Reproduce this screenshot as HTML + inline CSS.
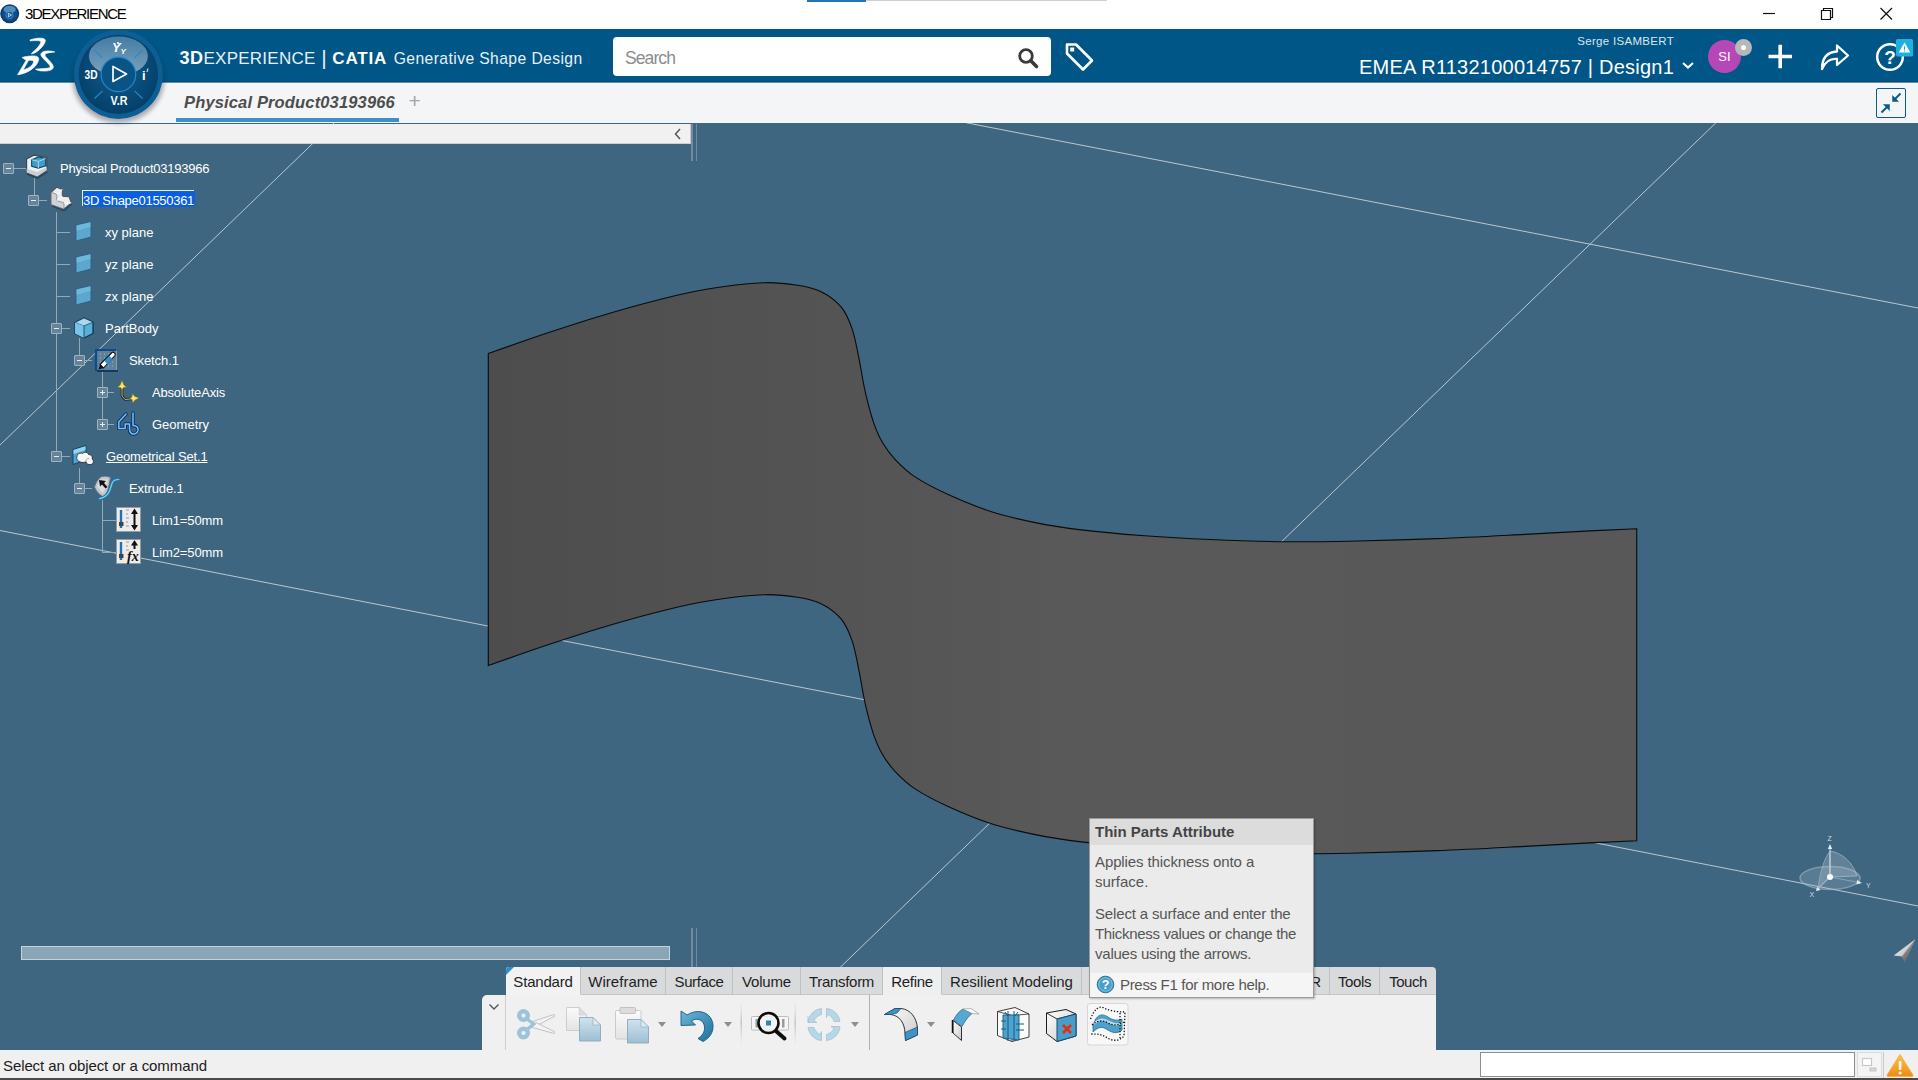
<!DOCTYPE html>
<html><head><meta charset="utf-8"><title>3DEXPERIENCE</title>
<style>
*{box-sizing:border-box;margin:0;padding:0}
html,body{width:1918px;height:1080px;overflow:hidden;background:#3e6680;font-family:"Liberation Sans","DejaVu Sans",sans-serif}
.abs{position:absolute}
#titlebar{left:0;top:0;width:1918px;height:29px;background:#fff}
#titlebar .t{left:25px;top:5px;font-size:15px;color:#000;letter-spacing:-1.28px;line-height:18px;white-space:nowrap}
#hdr{left:0;top:29px;width:1918px;height:53px;background:#005686;box-shadow:inset 0 -1px 0 #004c78}
#tabbar{left:0;top:82px;width:1918px;height:42px;background:#f4f5f6;border-bottom:1px solid #3f5a6e;box-shadow:inset 0 1px 0 #5a8fae}
#viewport{left:0;top:123px;width:1918px;height:927px;background:#3e6680;overflow:hidden}
#treehdr{left:0;top:124px;width:691px;height:20px;background:#f1f1f1;border-right:1px solid #c8c8c8;border-bottom:1px solid #d0d0d0}
#status{left:0;top:1050px;width:1918px;height:28px;background:#f0f0f0}
#bottomline{left:0;top:1078px;width:1918px;height:2px;background:#4a4a4a}
.tree{color:#fff;font-size:13px;white-space:nowrap}
.tree span{position:absolute;line-height:16px}

#hdr .brand{left:179.5px;top:15px;font-size:17px;color:#fff;white-space:nowrap;line-height:28px}
#hdr .brand b{font-weight:700}
#hdr .brand .lt{color:#e8f0f5;font-weight:400}
#hdr .brand .app{font-size:15.7px;margin-left:2px;color:#e8f0f5;letter-spacing:.4px}
#bbar{letter-spacing:-.1px;font-size:21px;font-weight:400;position:relative;top:.5px;line-height:10px}#b3d{font-size:18px;letter-spacing:.5px}#bexp{letter-spacing:.24px}#bcat{letter-spacing:.8px}
#search{left:613px;top:8px;width:438px;height:39px;background:#fff;border-radius:4px}
#search span{position:absolute;left:12px;top:11px;font-size:17.5px;color:#8c8c8c;letter-spacing:-.9px}
#user{right:244px;top:6px;letter-spacing:.3px;font-size:11.5px;color:#dbe6ee;white-space:nowrap}
#ctx{right:244px;top:25px;letter-spacing:.23px;font-size:20px;color:#fff;white-space:nowrap;line-height:26px}
#avatar{left:1708px;top:11px;width:33px;height:33px;border-radius:50%;background:#b647b6;color:#fff;font-size:13px;text-align:center;line-height:33px}
#avdot{left:1735px;top:10px;width:17px;height:17px;border-radius:50%;background:#b8b8b8}
#avdot i{position:absolute;left:6px;top:6px;width:5px;height:5px;border-radius:50%;background:#fff}
#ptab{left:184px;top:9px;letter-spacing:.15px;font-size:16.5px;font-weight:700;font-style:italic;color:#4d4d4d;white-space:nowrap;line-height:22px}
#ptabline{left:176px;top:36px;width:223px;height:4px;background:#3d8ec9}
#pplus{left:408.5px;top:7px;font-size:21px;color:#a5a5a5;line-height:24px}
#cmpbtn{left:1876px;top:6px;width:30px;height:30px;border:1px solid #0b5a88;border-radius:2px;background:#f4f5f6}
.tree .ln{position:absolute;background:#94a9b6;display:block}
.tree .ex{position:absolute;width:11px;height:11px;border:1px solid #9fb3bf;background:#66839a;display:block;border-radius:1px}
.tree .ex b{position:absolute;left:2px;top:4px;width:5px;height:1px;background:#e6edf1}
.tree .ex u{position:absolute;left:4px;top:2px;width:1px;height:5px;background:#e6edf1}
.tree span.sel{background:#0a5fe0;box-shadow:-1px -1px 0 #e8f1f8;padding:3px 1px 0 0;line-height:13px;margin-top:-2px}
.tree span.ul{text-decoration:underline}
#tabs{left:506px;top:967px;height:28px;width:930px;background:#d9dadb;border-radius:3px 4px 0 0;overflow:hidden;font-size:15px;color:#1e1e1e;white-space:nowrap}
#tabs span{position:absolute;top:0;height:28px;line-height:30px;text-align:center;border-right:1px solid #bfc2c4;border-bottom:1px solid #c6c6c6;letter-spacing:-0.2px}
#tabs span.on{background:#f2f2f2;border-bottom-color:#f2f2f2}
#tabs span.hv{background:#eeefef;border-bottom-color:#eeefef}
#tbody{left:482px;top:995px;width:954px;height:55px;background:#f0f0f0;border-radius:5px 0 0 0}
#tbody .sep{position:absolute;top:6px;width:1px;height:44px;background:#d3d3d3}
#tbody .dd{position:absolute;top:27px;width:0;height:0;border-left:4px solid transparent;border-right:4px solid transparent;border-top:5px solid #8e8e8e}
#tip{left:1089px;top:818px;width:225px;height:180px;background:#ebebeb;border:1px solid #9a9a9a;box-shadow:1px 1px 2px rgba(0,0,0,.25);font-size:15px;color:#555;white-space:nowrap}
#tip .tt{position:absolute;left:0;top:0;width:223px;height:26px;background:#dcdcdc;font-weight:700;color:#444;line-height:26px;padding-left:5px}
#tip p{position:absolute;left:5px;line-height:20px}
#tip .ft{letter-spacing:-.32px;position:absolute;left:0;top:154px;width:223px;height:24px;background:#f5f5f5;line-height:23px;padding-left:30px}
#status .st{position:absolute;left:3px;top:5px;font-size:15px;color:#1c1c1c;line-height:20px;white-space:nowrap}
#cmdbox{left:1480px;top:1052px;width:375px;height:25px;background:#fff;border:1px solid #8e8e8e}
#scroll{left:21px;top:946px;width:649px;height:14px;background:#8aa5b6;border:1px solid #c5d3dc}
.spl{background:#748b9c}
</style></head><body>
<div id="titlebar" class="abs"><span class="abs t">3DEXPERIENCE</span></div>
<div id="hdr" class="abs">
<div class="abs brand"><b id="b3d">3D</b><span class="lt" id="bexp">EXPERIENCE</span><span class="lt" id="bbar"> | </span><b id="bcat">CATIA</b> <span class="app" id="bapp">Generative Shape Design</span></div>
<div id="search" class="abs"><span>Search</span>
<svg class="abs" style="left:403px;top:9px" width="24" height="24" viewBox="0 0 24 24"><circle cx="10" cy="10" r="6.3" fill="none" stroke="#3a3a3a" stroke-width="2.8"/><line x1="14.8" y1="14.8" x2="20.5" y2="20.5" stroke="#3a3a3a" stroke-width="3.6" stroke-linecap="round"/></svg></div>
<div id="user" class="abs">Serge ISAMBERT</div>
<div id="ctx" class="abs">EMEA R1132100014757 | Design1</div>
<div id="avatar" class="abs">SI</div><div id="avdot" class="abs"><i></i></div>
</div>
<div id="tabbar" class="abs">
<div id="ptab" class="abs">Physical Product03193966</div><div id="ptabline" class="abs"></div><div id="pplus" class="abs">+</div>
<div id="cmpbtn" class="abs"></div>
</div>
<div id="viewport" class="abs">
<svg class="abs" style="left:0;top:0" width="1918" height="927" viewBox="0 123 1918 927">
<defs><linearGradient id="sg" x1="488" x2="1637" y1="0" y2="0" gradientUnits="userSpaceOnUse">
<stop offset="0" stop-color="#4d4d4d"/><stop offset="0.35" stop-color="#555"/><stop offset="0.5" stop-color="#595959"/><stop offset="1" stop-color="#585858"/></linearGradient></defs>
<g stroke="#bbc7cf" stroke-width="1" fill="none">
<line x1="334" y1="123" x2="0" y2="445"/>
<line x1="966" y1="122.7" x2="1918" y2="308"/>
<line x1="1716" y1="122.7" x2="840" y2="967.5"/>
<line x1="0" y1="530.5" x2="1918" y2="906"/>
</g>
<path id="shape" fill="url(#sg)" stroke="#0a0a0a" stroke-width="1.1" d="M488.3,353.6 C497.9,350.2 525.2,340.3 545.7,333.5 C566.2,326.7 589.5,319.1 611.4,312.7 C633.3,306.3 658.8,299.5 677.0,295.2 C695.2,290.9 706.3,289.1 720.9,287.0 C735.5,284.9 751.8,283.0 764.6,282.7 C777.4,282.4 788.0,283.8 797.5,285.3 C807.0,286.8 814.3,288.2 821.6,291.9 C828.9,295.5 836.2,301.0 841.3,307.2 C846.4,313.4 849.3,320.7 852.2,329.1 C855.1,337.5 856.6,347.0 858.8,357.6 C861.0,368.2 862.9,381.8 865.4,392.6 C867.9,403.4 870.8,414.3 873.6,422.6 C876.5,430.9 878.9,436.4 882.5,442.5 C886.1,448.6 889.6,453.6 895.0,459.3 C900.4,465.0 905.9,470.8 914.7,476.6 C923.5,482.4 934.8,488.4 947.6,494.2 C960.4,500.0 976.8,507.0 991.4,511.7 C1006.0,516.4 1020.6,519.6 1035.2,522.6 C1049.8,525.6 1060.8,527.4 1079.0,529.6 C1097.2,531.8 1122.8,534.1 1144.7,535.8 C1166.6,537.4 1187.1,538.5 1210.3,539.5 C1233.5,540.5 1260.6,541.4 1283.8,541.7 C1307.0,542.0 1324.0,541.7 1349.5,541.2 C1375.0,540.7 1407.8,539.7 1437.0,538.6 C1466.2,537.5 1499.0,535.7 1524.6,534.4 C1550.1,533.1 1571.6,531.8 1590.3,530.9 C1609.0,530.0 1629.0,529.1 1636.7,528.8 L1636.7,840.8 C1629.0,841.1 1609.0,842.0 1590.3,842.9 C1571.6,843.8 1550.1,845.1 1524.6,846.4 C1499.0,847.7 1466.2,849.5 1437.0,850.6 C1407.8,851.7 1375.0,852.7 1349.5,853.2 C1324.0,853.7 1307.0,854.0 1283.8,853.7 C1260.6,853.4 1233.5,852.5 1210.3,851.5 C1187.1,850.5 1166.6,849.4 1144.7,847.8 C1122.8,846.1 1097.2,843.8 1079.0,841.6 C1060.8,839.4 1049.8,837.6 1035.2,834.6 C1020.6,831.6 1006.0,828.4 991.4,823.7 C976.8,819.0 960.4,812.1 947.6,806.2 C934.8,800.4 923.5,794.4 914.7,788.6 C905.9,782.8 900.4,777.0 895.0,771.3 C889.6,765.6 886.1,760.6 882.5,754.5 C878.9,748.4 876.5,742.9 873.6,734.6 C870.8,726.3 867.9,715.4 865.4,704.6 C862.9,693.8 861.0,680.2 858.8,669.6 C856.6,659.0 855.1,649.5 852.2,641.1 C849.3,632.7 846.4,625.4 841.3,619.2 C836.2,613.0 828.9,607.5 821.6,603.9 C814.3,600.2 807.0,598.8 797.5,597.3 C788.0,595.8 777.4,594.4 764.6,594.7 C751.8,595.0 735.5,596.9 720.9,599.0 C706.3,601.1 695.2,602.9 677.0,607.2 C658.8,611.5 633.3,618.3 611.4,624.7 C589.5,631.1 566.2,638.7 545.7,645.5 C525.2,652.3 497.9,662.2 488.3,665.6 Z"/>
</svg>
</div>
<div id="treehdr" class="abs"></div>
<div id="status" class="abs"></div>
<div id="bottomline" class="abs"></div>
<div class="tree abs" style="left:0;top:0;width:700px;height:1080px;pointer-events:none">
<i class="ln" style="left:13px;top:168px;width:13px;height:1px"></i>
<i class="ln" style="left:34px;top:178px;width:1px;height:22px"></i>
<i class="ln" style="left:38px;top:200px;width:9px;height:1px"></i>
<i class="ln" style="left:56px;top:212px;width:1px;height:244px"></i>
<i class="ln" style="left:56px;top:232px;width:14px;height:1px"></i>
<i class="ln" style="left:56px;top:264px;width:14px;height:1px"></i>
<i class="ln" style="left:56px;top:296px;width:14px;height:1px"></i>
<i class="ln" style="left:61px;top:328px;width:9px;height:1px"></i>
<i class="ln" style="left:61px;top:456px;width:9px;height:1px"></i>
<i class="ln" style="left:79px;top:338px;width:1px;height:22px"></i>
<i class="ln" style="left:84px;top:360px;width:8px;height:1px"></i>
<i class="ln" style="left:102px;top:372px;width:1px;height:52px"></i>
<i class="ln" style="left:107px;top:392px;width:7px;height:1px"></i>
<i class="ln" style="left:107px;top:424px;width:7px;height:1px"></i>
<i class="ln" style="left:79px;top:468px;width:1px;height:20px"></i>
<i class="ln" style="left:84px;top:488px;width:8px;height:1px"></i>
<i class="ln" style="left:102px;top:500px;width:1px;height:52px"></i>
<i class="ln" style="left:102px;top:520px;width:14px;height:1px"></i>
<i class="ln" style="left:102px;top:552px;width:14px;height:1px"></i>
<i class="ex" style="left:3px;top:163px"><b></b></i>
<svg class="abs" style="left:25px;top:156px;overflow:visible" width="24" height="24" viewBox="0 0 24 24"><g transform="translate(-1.2,-3.6) scale(1.12)"><path d="M2.500,6 L9,2.500 L20.500,4.500 L20.500,16 L12,21.500 L2.500,18Z" fill="#eef1f3" stroke="#3b444b" stroke-width="1"/><path d="M2.500,18 L12,21.500 L20.500,16 L20.500,13 L12,17.500 L2.500,14.500Z" fill="#c9cfd4"/><path d="M7,6.500 L13,4 L19.500,5.500 L19.500,12 L13,14 L7,12.500Z" fill="#3f9dcc" stroke="#0f4a6b" stroke-width="1"/><path d="M7,6.500 L13,8 L19.500,5.500 M13,8 L13,14" stroke="#b9e0f2" stroke-width=".8" fill="none"/><path d="M3,19.500 L12,23 L21,17.500" stroke="#1e2a33" stroke-width="1.200" fill="none" opacity=".6"/></g></svg>
<span style="left:60px;top:161px;letter-spacing:-0.22px">Physical Product03193966</span>
<i class="ex" style="left:28px;top:195px"><b></b></i>
<svg class="abs" style="left:49px;top:188px;overflow:visible" width="24" height="24" viewBox="0 0 24 24"><g transform="translate(-1.2,-3.6) scale(1.12)"><path d="M3,7 L8,2.500 L13,4.500 L13,10.500 L19,11 L21,16.500 L14.500,22 L3,18Z" fill="#ebedee" stroke="#4f575d" stroke-width="1"/><path d="M3,7 L8,9 L8,14.500 L14.500,16.500 L14.500,22 L3,18Z" fill="#cfd3d6" stroke="#6f777d" stroke-width=".6"/><path d="M8,9 L13,4.500 M8,14.500 L13,10.500 M14.500,16.500 L21,16.500" stroke="#fbfbfb" stroke-width=".9"/><path d="M4,19.500 L14.500,23.500 L21.500,17.500" stroke="#222c33" stroke-width="1.200" fill="none" opacity=".55"/></g></svg>
<span class="sel" style="left:83px;top:193px;letter-spacing:-0.29px">3D Shape01550361</span>
<svg class="abs" style="left:72px;top:220px;overflow:visible" width="24" height="24" viewBox="0 0 24 24"><path d="M4,5 L19,1.500 L19,17 L4,21Z" fill="#5aa8cf" stroke="#2a6588" stroke-width="1"/><path d="M4.500,5.500 L18.500,2.200 L18.500,7 L4.500,11Z" fill="#86c3e0" opacity=".55"/></svg>
<span style="left:105px;top:225px">xy plane</span>
<svg class="abs" style="left:72px;top:252px;overflow:visible" width="24" height="24" viewBox="0 0 24 24"><path d="M4,5 L19,1.500 L19,17 L4,21Z" fill="#5aa8cf" stroke="#2a6588" stroke-width="1"/><path d="M4.500,5.500 L18.500,2.200 L18.500,7 L4.500,11Z" fill="#86c3e0" opacity=".55"/></svg>
<span style="left:105px;top:257px">yz plane</span>
<svg class="abs" style="left:72px;top:284px;overflow:visible" width="24" height="24" viewBox="0 0 24 24"><path d="M4,5 L19,1.500 L19,17 L4,21Z" fill="#5aa8cf" stroke="#2a6588" stroke-width="1"/><path d="M4.500,5.500 L18.500,2.200 L18.500,7 L4.500,11Z" fill="#86c3e0" opacity=".55"/></svg>
<span style="left:105px;top:289px">zx plane</span>
<i class="ex" style="left:51px;top:323px"><b></b></i>
<svg class="abs" style="left:72px;top:316px;overflow:visible" width="24" height="24" viewBox="0 0 24 24"><path d="M3,6.500 L12,2 L21,6 L21,17.500 L12,22 L3,17.500Z" fill="#57b0db" stroke="#0d3a55" stroke-width="1.300" stroke-linejoin="round"/><path d="M3,6.500 L12,10 L21,6 L12,2Z" fill="#a9daf0" stroke="#0d3a55" stroke-width=".7"/><path d="M3,6.500 L12,10 L12,22 L3,17.500Z" fill="#7ac3e6"/><path d="M12,10 L12,22" stroke="#0d3a55" stroke-width=".8"/></svg>
<span style="left:105px;top:321px">PartBody</span>
<i class="ex" style="left:74px;top:355px"><b></b></i>
<svg class="abs" style="left:94px;top:348px;overflow:visible" width="24" height="24" viewBox="0 0 24 24"><rect x="2.500" y="2.500" width="20" height="19.500" fill="#5f8199"/><path d="M6,6h1M10,6h1M14,6h1M18,6h1M6,10h1M10,10h1M18,10h1M6,14h1M14,14h1M18,14h1M10,18h1M14,18h1M18,18h1" stroke="#9db3c2" stroke-width="1"/><path d="M2,23 V2 H22" fill="none" stroke="#0d4a8e" stroke-width="2.200"/><path d="M3,23 H24" stroke="#0b2f5c" stroke-width="1.600"/><path d="M22.500,3 V22" stroke="#8fa6b6" stroke-width=".8"/><path d="M6,16.500 L18,4.500 C19.500,3.500 22,5.500 21,7.500 L9.500,20 Z" fill="#fff" stroke="#111" stroke-width="1.100" stroke-linejoin="round"/><path d="M10.500,13 L15.500,8 L18.500,11 L13.500,16.500 Z" fill="#2a8cd2"/><path d="M6,16.500 L9.500,20 L4.500,21.500 Z" fill="#111"/></svg>
<span style="left:129px;top:353px;letter-spacing:-0.1px">Sketch.1</span>
<i class="ex" style="left:97px;top:387px"><b></b><u></u></i>
<svg class="abs" style="left:115px;top:380px;overflow:visible" width="24" height="24" viewBox="0 0 24 24"><path d="M7,6 L7,16 L10,19.500 L20,18.500" fill="none" stroke="#141f4d" stroke-width="2.600" stroke-linejoin="round"/><path d="M7,6 L7,16 L10,19.500 L20,18.500" fill="none" stroke="#e8c53a" stroke-width=".9"/><path d="M7,0.500 L8.800,5 L11.500,7 L8.500,7.500 L7,9.500 L5.500,7.500 L2.500,7 L5.200,5 Z" fill="#ffe36a" stroke="#8a6a00" stroke-width=".5"/><path d="M24,18 L19.500,16.300 L17.500,13.500 L17,16.800 L15,18.500 L17.200,19.800 L17.800,23 L19.800,20.200 Z" fill="#ffe36a" stroke="#8a6a00" stroke-width=".5"/></svg>
<span style="left:152px;top:385px;letter-spacing:-0.18px">AbsoluteAxis</span>
<i class="ex" style="left:97px;top:419px"><b></b><u></u></i>
<svg class="abs" style="left:115px;top:412px;overflow:visible" width="24" height="24" viewBox="0 0 24 24"><g fill="none" stroke-linejoin="round" stroke-linecap="round"><path d="M10.200,16.400 H3.800 V10 L11,2 M18,1 V13.500 C22,13.500 23.500,16 23,18.500 C22.500,21.500 19,23 16.500,21.500 C14.800,20.500 14.500,19 14.500,17 V12 H10.200 V16.400" stroke="#0f2f6e" stroke-width="3.400"/><path d="M10.200,16.400 H3.800 V10 L11,2 M18,1 V13.500 C22,13.500 23.500,16 23,18.500 C22.500,21.500 19,23 16.500,21.500 C14.800,20.500 14.500,19 14.500,17 V12 H10.200 V16.400" stroke="#6ec6f2" stroke-width="1.500"/></g></svg>
<span style="left:152px;top:417px">Geometry</span>
<i class="ex" style="left:51px;top:451px"><b></b></i>
<svg class="abs" style="left:71px;top:444px;overflow:visible" width="24" height="24" viewBox="0 0 24 24"><path d="M2,5.500 L15,1.500 L15,16 L2,20.500Z" fill="#4da6d8" stroke="#0f4766" stroke-width="1"/><path d="M2.500,6 L14.500,2.200 L14.500,6 L2.500,10Z" fill="#9ad2ee"/><path d="M6,12.500 C6,9.500 9,8.500 11.500,9.500 C13,7.500 17,8 17.500,10.500 C20.500,10.500 22,13 21,15 C23.500,16.500 22.500,20.500 19.500,20.500 C17,21 15.500,19.500 15,18 C12,19 7.500,18.500 6.500,16 C5.500,15 5.500,13.500 6,12.500Z" fill="#f6f6f6" stroke="#2b2f33" stroke-width=".9"/><path d="M15,18 C14.500,16 16,14 18,14.500" fill="none" stroke="#8a8f94" stroke-width=".8"/></svg>
<span class="ul" style="left:106px;top:449px;letter-spacing:-0.15px">Geometrical Set.1</span>
<i class="ex" style="left:74px;top:483px"><b></b></i>
<svg class="abs" style="left:94px;top:476px;overflow:visible" width="26" height="26" viewBox="0 0 26 26"><path d="M0.500,11 C2,6 5,1.500 8,0.500 C11,0 14.500,0.500 16.500,1.500 L14.200,13 C13,17 11,19.500 8.800,20.500 C5,18.500 2,15 0.500,11Z" fill="#c2c6ca" stroke="#6a7075" stroke-width=".8"/><path d="M3,10 C4.500,6.500 6.500,4 8.500,3 L14,3.500 L12,12 C10.500,14 9.500,16 8.500,17.500Z" fill="#e4e6e8" opacity=".7"/><path d="M24.800,3.500 C21.500,3.500 19.500,4 18.400,6.500 C17,10 16.500,14 14.200,17.400 C12,20.500 9,22 5.600,22.700" fill="none" stroke="#1f76a8" stroke-width="3.400" stroke-linecap="round"/><path d="M24.800,3.500 C21.500,3.500 19.500,4 18.400,6.500 C17,10 16.500,14 14.200,17.400 C12,20.500 9,22 5.600,22.700" fill="none" stroke="#86cdee" stroke-width="1.200" stroke-linecap="round"/><path d="M5,4 L12,5 L10,7 L13.500,11 L11.500,12.500 L8,8.500 L6,10.500Z" fill="#111"/></svg>
<span style="left:129px;top:481px;letter-spacing:-0.1px">Extrude.1</span>
<svg class="abs" style="left:116px;top:507px;overflow:visible" width="25" height="25" viewBox="0 0 25 25"><rect x="0.5" y="0.5" width="24" height="24" fill="#ececec" stroke="#9a9a9a"/><path d="M5,3 L5,21" stroke="#1d74b3" stroke-width="2.4"/><rect x="3" y="15" width="4.5" height="4" fill="#444"/><path d="M10,3h3M10,7h2M10,11h3M10,15h2M10,19h3" stroke="#888" stroke-width=".8"/><path d="M18.5,5 L18.5,20" stroke="#111" stroke-width="2"/><path d="M18.5,1.5 L15,7 L22,7Z M18.5,23.500 L15,18 L22,18Z" fill="#111"/></svg>
<span style="left:152px;top:513px;letter-spacing:-0.1px">Lim1=50mm</span>
<svg class="abs" style="left:116px;top:539px;overflow:visible" width="25" height="25" viewBox="0 0 25 25"><rect x="0.5" y="0.5" width="24" height="24" fill="#ececec" stroke="#9a9a9a"/><path d="M5,3 L5,21" stroke="#1d74b3" stroke-width="2.4"/><rect x="3" y="15" width="4.5" height="4" fill="#444"/><path d="M10,3h3M10,7h2M10,11h3" stroke="#888" stroke-width=".8"/><path d="M18.500,4 L18.500,10" stroke="#111" stroke-width="2"/><path d="M18.5,1 L15,6.500 L22,6.500Z" fill="#111"/><text x="11" y="22" font-family="Liberation Serif,serif" font-style="italic" font-weight="700" font-size="14" fill="#111">fx</text></svg>
<span style="left:152px;top:545px;letter-spacing:-0.1px">Lim2=50mm</span>
</div><!-- tree header chevron -->
<svg class="abs" style="left:672px;top:127px" width="12" height="14" viewBox="0 0 12 14"><path d="M8,2 L3.5,7 L8,12" fill="none" stroke="#555" stroke-width="1.5"/></svg>
<!-- splitter -->
<i class="abs spl" style="left:691px;top:124px;width:2px;height:37px"></i><i class="abs spl" style="left:696px;top:124px;width:1px;height:37px"></i>
<i class="abs spl" style="left:691px;top:928px;width:2px;height:39px"></i><i class="abs spl" style="left:696px;top:928px;width:1px;height:39px"></i>
<div id="scroll" class="abs"></div>
<!-- toolbar -->
<div id="tabs" class="abs">
<span class="on" style="left:0;width:75px">Standard</span>
<span style="left:75px;width:85px;letter-spacing:.03px">Wireframe</span>
<span style="left:160px;width:67px;letter-spacing:-.4px">Surface</span>
<span style="left:227px;width:68px">Volume</span>
<span style="left:295px;width:82px;letter-spacing:-.3px">Transform</span>
<span class="hv" style="left:377px;width:59px;letter-spacing:-.35px">Refine</span>
<span style="left:436px;width:140px;letter-spacing:.02px">Resilient Modeling</span>
<span style="left:576px;width:248px;text-align:right;padding-right:8px">AR-VR</span>
<span style="left:824px;width:50px;letter-spacing:-.4px">Tools</span>
<span style="left:874px;width:56px;border-right:0;letter-spacing:-.5px">Touch</span>
<svg class="abs" style="left:0;top:0" width="8" height="8"><path d="M0,0 L8,0 L0,8Z" fill="#2f8ccf"/></svg>
</div>
<div id="tbody" class="abs">
<svg class="abs" style="left:6px;top:8px" width="12" height="8" viewBox="0 0 12 8"><path d="M1.500,1.500 L6,6 L10.500,1.500" fill="none" stroke="#555" stroke-width="1.4"/></svg>
<i class="sep" style="left:23px;top:0;height:55px;background:#cfcfcf"></i>
<i class="dd" style="left:176px"></i><i class="dd" style="left:242px"></i><i class="dd" style="left:369px"></i><i class="dd" style="left:445px"></i>
<svg class="abs" style="left:23px;top:0" width="660" height="55" viewBox="505 995 660 55">
<defs>
<linearGradient id="lb" x1="0" y1="0" x2="0" y2="1"><stop offset="0" stop-color="#cfe3ee"/><stop offset="1" stop-color="#9dbfd2"/></linearGradient>
<linearGradient id="wh" x1="0" y1="0" x2="0" y2="1"><stop offset="0" stop-color="#fbfbfb"/><stop offset="1" stop-color="#e3e3e3"/></linearGradient>
<linearGradient id="ub" x1="0" y1="0" x2="1" y2="1"><stop offset="0" stop-color="#6cb6da"/><stop offset="1" stop-color="#1f6f9c"/></linearGradient>
<linearGradient id="wg2" x1="0" y1="0" x2="1" y2="1"><stop offset="0" stop-color="#fff"/><stop offset="1" stop-color="#c9c9c9"/></linearGradient>
<linearGradient id="sepg" x1="0" y1="0" x2="0" y2="1"><stop offset="0" stop-color="#d9d9d9" stop-opacity="0"/><stop offset=".5" stop-color="#c4c4c4"/><stop offset="1" stop-color="#d9d9d9" stop-opacity="0"/></linearGradient>
</defs>
<!-- scissors -->
<g><path d="M531,1022 L554,1014.500 L555,1016 L536,1026 Z" fill="#f4f4f4" stroke="#b4b4b4" stroke-width=".8"/><path d="M531,1027 L554,1033.500 L555,1032 L536,1022.500 Z" fill="#f4f4f4" stroke="#b4b4b4" stroke-width=".8"/>
<circle cx="523.500" cy="1015.500" r="4.300" fill="none" stroke="#9cc3d9" stroke-width="4.400"/><circle cx="523.500" cy="1033" r="4.300" fill="none" stroke="#9cc3d9" stroke-width="4.400"/>
<path d="M527,1019 L535,1025 M527,1029.500 L535,1023" stroke="#9cc3d9" stroke-width="3.400"/></g>
<!-- copy -->
<path d="M566.500,1007.500 H579 L586.500,1015 V1030.500 H566.500 Z" fill="url(#wh)" stroke="#c9c9c9" stroke-width=".9"/><path d="M579,1007.500 V1015 H586.500 Z" fill="#dedede" stroke="#c9c9c9" stroke-width=".6"/>
<path d="M579.500,1017.500 H593 L600.500,1025 V1041 H579.500 Z" fill="url(#lb)" stroke="#8aa9ba" stroke-width=".9"/><path d="M593,1017.500 V1025 H600.500 Z" fill="#dcebf3" stroke="#8aa9ba" stroke-width=".6"/>
<!-- paste -->
<rect x="615.500" y="1010.500" width="25.500" height="28.500" rx="1.500" fill="url(#wh)" stroke="#c6c6c6" stroke-width=".9"/><rect x="620" y="1007.500" width="15.500" height="6" rx="1" fill="#dcdcdc" stroke="#b9b9b9" stroke-width=".8"/>
<path d="M627.500,1019.500 H641 L648.500,1027 V1043 H627.500 Z" fill="url(#lb)" stroke="#8aa9ba" stroke-width=".9"/><path d="M641,1019.500 V1027 H648.500 Z" fill="#dcebf3" stroke="#8aa9ba" stroke-width=".6"/>
<!-- undo -->
<path d="M681,1011 L681,1025.500 L695.500,1025 L691.500,1021 C697,1017 704,1020 704.500,1027 C705,1032 702,1036 698,1038.500 L703,1041.500 C710,1038 713.500,1032 713,1025 C712,1013 699,1007.500 687,1015 Z" fill="url(#ub)" stroke="#175b83" stroke-width=".9" stroke-linejoin="round"/>
<!-- seps -->
<rect x="740.500" y="1000" width="1.500" height="46" fill="url(#sepg)"/><rect x="794.500" y="1000" width="1.500" height="46" fill="url(#sepg)"/>
<rect x="869" y="995" width="1" height="55" fill="#b0b0b0"/>
<!-- zoom -->
<rect x="751.500" y="1016.500" width="37" height="13.500" rx="1" fill="#f6f6f6" stroke="#b5b5b5" stroke-width=".9"/><rect x="755.500" y="1019" width="2.500" height="8.500" fill="#9a9a9a"/><rect x="782" y="1019" width="2.500" height="8.500" fill="#9a9a9a"/>
<circle cx="768.500" cy="1023" r="10" fill="#f3f3f3" fill-opacity=".85" stroke="#0c0c0c" stroke-width="2.600"/><rect x="766" y="1020.500" width="5" height="5" fill="#2d86ad"/>
<path d="M776.500,1031.500 L784.500,1038.500" stroke="#0c0c0c" stroke-width="4" stroke-linecap="round"/>
<!-- refresh -->
<g fill="#b7d6e6" stroke="#9bbfd2" stroke-width=".7" stroke-linejoin="round">
<path d="M808,1022.500 C808.500,1015 814,1009.500 821.500,1008.500 L821.500,1014.500 C818,1015.500 815,1018 814,1021 L817,1022.500 L808,1022.500Z M808,1022.500 L808,1016"/>
<path d="M826.500,1008.500 C833.500,1009 839,1014.500 840,1021.500 L834,1021.500 C833,1018 830.500,1015.500 827.500,1014.500 L826.500,1017.500 Z"/>
<path d="M840,1026.500 C839.500,1034 834,1039.500 826.500,1040.500 L826.500,1034.500 C830,1033.500 833,1031 834,1028 L831,1026.500 Z"/>
<path d="M821.500,1040.500 C814.500,1040 809,1034.500 808,1027.500 L814,1027.500 C815,1031 817.500,1033.500 820.500,1034.500 L821.500,1031.500 Z"/></g>
<!-- extrude -->
<path d="M884.500,1014.500 L895,1008.500 L901,1008.500 C911,1009.500 916.500,1018 917.500,1028 L917.500,1035 L905.500,1040.500 L905,1033 C904.500,1023 900,1016 891,1014.500 Z" fill="url(#wg2)" stroke="#1d1d1d" stroke-width=".9" stroke-linejoin="round"/>
<path d="M884.500,1014.500 L895,1008.500 L901,1008.500 L897,1013 L891,1014.500 Z" fill="#3f94c4" stroke="#174e70" stroke-width=".7"/>
<path d="M905,1032.500 L917.500,1027 L917.500,1035 L905.500,1040.500 Z" fill="#3f94c4" stroke="#174e70" stroke-width=".7"/>
<!-- icon2 -->
<path d="M953,1020.500 L961.500,1027 L961.500,1040.500 L953,1033 Z" fill="url(#wg2)" stroke="#1d1d1d" stroke-width=".9"/><path d="M952.500,1020 L952.500,1033" stroke="#111" stroke-width="1.500"/>
<path d="M953.500,1020 C956,1015 959,1011.500 963,1009 L972,1013.500 C968,1016.500 965,1021 962,1026.500 Z" fill="#56a8d4" stroke="#1d6c98" stroke-width=".8"/>
<path d="M963,1009 L971,1008.500 L979,1014 L972,1013.500 Z" fill="#fcfcfc" stroke="#8a8a8a" stroke-width=".6"/>
<!-- icon3 cube -->
<path d="M997.500,1011.500 L1015,1007.500 L1029,1014 L1029,1037 L1012,1041.500 L997.500,1035.500 Z" fill="#fafafa" stroke="#2a2a2a" stroke-width=".9" stroke-linejoin="round"/>
<path d="M997.500,1011.500 L1012,1015.500 L1029,1014 M1012,1015.500 L1012,1041.500" fill="none" stroke="#2a2a2a" stroke-width=".8"/>
<path d="M1003,1015 L1019,1015 L1019,1040 L1003,1038 Z" fill="#4ea3cf" stroke="#175b83" stroke-width=".9"/>
<path d="M1008,1011 V1041 M1014,1011 V1041 M1001,1021 H1006 M1001,1029 H1006 M1016,1024 H1024 M1016,1030 H1024 M1005,1012 L1008,1016 M1018,1012 L1015,1016" stroke="#175b83" stroke-width="1" fill="none"/>
<!-- icon4 cube x -->
<path d="M1046.500,1013 L1066,1009.500 L1076,1014 L1076,1036 L1057,1041.500 L1046.500,1033.500 Z" fill="url(#wg2)" stroke="#1c1c1c" stroke-width="1" stroke-linejoin="round"/>
<path d="M1046.500,1013 L1057,1019 L1076,1014" fill="none" stroke="#1c1c1c" stroke-width=".9"/>
<path d="M1057,1019 L1076,1014 L1076,1036 L1057,1041.500 Z" fill="#4a9dca" stroke="#12506f" stroke-width="1"/>
<path d="M1063,1025 L1071,1033 M1071,1025 L1063,1033" stroke="#e0310f" stroke-width="2.600"/>
<!-- icon5 hover -->
<rect x="1087.500" y="1003.500" width="40.500" height="41.500" rx="2.500" fill="#f8f8f8" stroke="#d6d6d6"/>
<path d="M1093,1026 C1096,1014 1102,1013 1108,1017 C1113,1020.500 1118,1021 1122,1019 L1122,1030 C1118,1034 1112,1033 1107,1029.500 C1102,1026 1098,1027 1093,1032 Z" fill="#4f9fc7" stroke="#1f6f98" stroke-width=".8"/>
<path d="M1094,1024 C1100,1018 1104,1019 1109,1022 C1114,1025 1118,1025 1122,1023" fill="none" stroke="#b7dcee" stroke-width="2.200"/>
<g fill="none" stroke="#111" stroke-width="1.300" stroke-dasharray="1.300 1.700"><path d="M1090.500,1019 C1094,1010 1099,1005 1104,1008 C1110,1011 1118,1012 1125,1012 L1124,1036 C1119,1042 1111,1041 1106,1037 C1101,1034 1096,1034 1091,1034"/><path d="M1092,1025 C1098,1020 1103,1020 1108,1023 C1113,1026 1119,1025 1124,1022"/><path d="M1120,1013 V1038"/></g>
</svg>

</div>
<!-- tooltip -->
<div id="tip" class="abs">
<div class="tt">Thin Parts Attribute</div>
<p style="top:33px"><span style="letter-spacing:-.11px">Applies thickness onto a</span><br>surface.</p>
<p style="top:85px"><span style="letter-spacing:-.153px">Select a surface and enter the</span><br><span style="letter-spacing:-.33px">Thickness values or change the</span><br><span style="letter-spacing:-.23px">values using the arrows.</span></p>
<div class="ft">Press F1 for more help.</div>
<svg class="abs" style="left:6px;top:156px" width="19" height="19" viewBox="0 0 19 19"><circle cx="9.5" cy="9.5" r="8.3" fill="#4a9fc9" stroke="#2a6f96" stroke-width="1"/><circle cx="9.5" cy="9.5" r="6.7" fill="none" stroke="#8fcbe6" stroke-width=".8"/><text x="9.5" y="14" text-anchor="middle" font-family="Liberation Sans,sans-serif" font-weight="700" font-size="12.5" fill="#fff">?</text></svg>
</div>
<!-- status -->
<div id="status2" class="abs" style="left:0;top:1050px;width:1918px;height:28px"><span class="st abs" style="left:3px;top:6px;font-size:15px;color:#1c1c1c;line-height:20px;white-space:nowrap;letter-spacing:-.1px">Select an object or a command</span></div>
<div id="cmdbox" class="abs"></div>
<svg class="abs" style="left:1857px;top:1052px" width="61" height="26" viewBox="0 0 61 26">
<rect x="0.5" y="0.5" width="24" height="24" fill="#f4f4f4" stroke="#dcdcdc"/><rect x="5.5" y="6.5" width="9" height="7" fill="#fff" stroke="#c9c9c9" stroke-width="1.2"/><rect x="13" y="16" width="6" height="3" fill="#d9d9d9" stroke="#bbb" stroke-width=".8"/>
<line x1="26.5" y1="0" x2="26.5" y2="26" stroke="#c9c9c9"/>
<defs><linearGradient id="wg" x1="0" y1="0" x2="0" y2="1"><stop offset="0" stop-color="#ffc24d"/><stop offset="1" stop-color="#f08a12"/></linearGradient></defs>
<path d="M43,2.500 L56,23 Q56.500,24.500 55,24.500 L31,24.500 Q29.500,24.500 30,23 Z" fill="url(#wg)" stroke="#f7b24a" stroke-width="1" stroke-linejoin="round"/>
<rect x="41.800" y="9" width="2.600" height="9" rx="1.200" fill="#fff"/><circle cx="43.100" cy="21" r="1.500" fill="#fff"/>
</svg>
<!-- title bar bits -->
<i class="abs" style="left:807px;top:0;width:59px;height:2px;background:#1f74b6"></i><i class="abs" style="left:866px;top:0;width:241px;height:1px;background:#cfcfcf"></i>
<svg class="abs" style="left:0;top:4px" width="20" height="20" viewBox="0 0 20 20"><circle cx="9.700" cy="9.700" r="9.500" fill="#0a3d75"/><circle cx="9.700" cy="9.700" r="7.600" fill="#0f4f8a"/><ellipse cx="9.700" cy="5.500" rx="6" ry="3.800" fill="#5d97c4" opacity=".85"/><circle cx="9.500" cy="11" r="3.600" fill="#0e588c" stroke="#55a7df" stroke-width=".6"/><path d="M8.400,9.200 L11.500,11 L8.400,12.800Z" fill="none" stroke="#fff" stroke-width=".7"/></svg>
<svg class="abs" style="left:1750px;top:0" width="168" height="29" viewBox="0 0 168 29"><g stroke="#111" stroke-width="1.2" fill="none"><path d="M13,13.500 H25"/><path d="M71.500,10.500 h9 v9 h-9 Z M73.500,10.500 V8.500 h9 v9 h-2"/><path d="M130.500,8 L142,19.500 M142,8 L130.500,19.500"/></g></svg>
<!-- 3DS logo -->
<svg class="abs" style="left:0;top:29px" width="70" height="53" viewBox="0 29 70 53"><g fill="#fff" fill-rule="evenodd" stroke="#fff" stroke-width=".7" stroke-linejoin="round">
<path d="M30.1,39.9 C34,38.600 38,38 40.600,38.200 C44.500,38.300 45.800,39.500 45.200,41.500 C44.500,44.500 41,48.500 37.500,51.200 C35.500,52.700 33.500,53.600 31.400,53.900 L32.400,52.400 C35,50.500 37.500,48 39.200,45.500 C40.800,43 41.500,41.800 40.200,41.100 C38.500,40.400 34,40.500 30.100,40.900 Z"/>
<path d="M22,57.500 C26,56.300 31,55.800 34.500,56 C38,56.300 39.300,57.800 38.500,60.500 C37.500,64 34.500,67.500 30.400,70.200 C26.500,72.600 22,74.200 17.600,74.800 L26.200,60.200 C25,59.500 23.500,58.500 22,57.500 Z M28.500,60.300 C31,60 33.500,60.200 33.600,61.500 C33.700,63.500 31.500,66 29,67.500 C27,68.800 25,69.500 23.200,69.800 Z"/>
<path d="M54.800,51.900 C51,50.800 47.500,50.800 45,51.300 C41.500,52 40,54 41.500,56.300 C43.500,59.300 47,62 49.500,65 C50.800,66.600 50.300,67.800 48,68.200 C44.500,68.700 39.500,68.600 35.500,69.200 C38,70.800 42,71.200 45.500,71 C50,70.800 53.500,69.500 53.300,66.800 C53,64 49.500,61 46.800,58 C45,56 44.200,54.300 46.200,53.400 C48.500,52.500 52,52.500 54.800,51.900 Z"/></g></svg>
<!-- compass wheel -->
<svg class="abs" style="left:66px;top:24px" width="106" height="104" viewBox="66 24 106 104">
<defs><radialGradient id="cg" cx="50%" cy="45%" r="55%"><stop offset="0" stop-color="#0e5f93"/><stop offset="1" stop-color="#053f68"/></radialGradient>
<linearGradient id="gl" x1="0" y1="0" x2="0" y2="1"><stop offset="0" stop-color="#4f86ad"/><stop offset="1" stop-color="#8fb1c9"/></linearGradient>
<filter id="bl" x="-20%" y="-20%" width="140%" height="140%"><feGaussianBlur stdDeviation="2"/></filter></defs>
<ellipse cx="118.400" cy="79" rx="46" ry="44" fill="#223" opacity=".35" filter="url(#bl)"/>
<circle cx="118.400" cy="74.400" r="44.500" fill="#0c5f94"/>
<circle cx="118.400" cy="74.400" r="39.700" fill="url(#cg)"/>
<ellipse cx="118.400" cy="56" rx="29.500" ry="19.500" fill="url(#gl)" opacity=".85"/>
<g stroke="#2a8acb" stroke-width="1.100"><path d="M94.500,50 L102.500,57.800 M142.500,50 L134.500,57.800 M94.500,98.500 L102.500,90.800 M142.500,98.500 L134.500,90.800"/></g>
<circle cx="118.400" cy="74.400" r="17.300" fill="#0a5485" stroke="#2289cd" stroke-width="1.200"/>
<path d="M113,66.500 L113,81.500 L126.500,74 Z" fill="none" stroke="#fff" stroke-width="1.700" stroke-linejoin="round"/>
<g fill="#fff" font-family="Liberation Sans,sans-serif" font-weight="700">
<text x="84.500" y="79" font-size="12.500" textLength="13" lengthAdjust="spacingAndGlyphs">3D</text>
<text x="110.500" y="105" font-size="12.500" textLength="17" lengthAdjust="spacingAndGlyphs">V.R</text>
<text x="142" y="79.500" font-size="13">i</text><text x="146.500" y="72" font-size="6" font-style="italic">i</text>
<text x="112" y="51.500" font-size="13" font-style="italic">Y</text><text x="120.500" y="53.500" font-size="8" font-style="italic">Y</text></g>
<circle cx="118" cy="43" r="1.100" fill="#fff"/>
</svg>
<!-- tag -->
<svg class="abs" style="left:1062.5px;top:41px" width="34" height="32" viewBox="0 0 34 32"><path d="M4,3.500 L13,3.500 L29,19.500 L20,28.500 L4,12.500 Z" fill="none" stroke="#fff" stroke-width="2.600" stroke-linejoin="round"/><rect x="7.200" y="6.500" width="4" height="4" fill="#fff"/></svg>
<!-- ctx chevron, plus, share, help -->
<svg class="abs" style="left:1678px;top:36px" width="240" height="44" viewBox="1678 36 240 44">
<path d="M1683,63 L1688,67.500 L1693,63" fill="none" stroke="#fff" stroke-width="2.200"/>
<path d="M1768.500,56.500 H1792 M1780.200,44.800 V68.200" stroke="#fff" stroke-width="3.600"/>
<path d="M1837,45.500 L1848,55.500 L1837,65 L1837,59 C1830,58.500 1825,62 1822,69 C1822,58 1827,52 1837,51.500 Z" fill="none" stroke="#fff" stroke-width="2.300" stroke-linejoin="round"/>
<circle cx="1890" cy="57" r="12.800" fill="none" stroke="#fff" stroke-width="2.500"/>
<text x="1890" y="64" text-anchor="middle" font-family="Liberation Sans,sans-serif" font-weight="700" font-size="19" fill="#fff">?</text>
<rect x="1896" y="39" width="17" height="17.500" rx="1.500" fill="#1fb0e2"/>
<path d="M1904.500,42.500 L1910.300,52.500 L1898.700,52.500 Z" fill="#fff"/><rect x="1904" y="46" width="1.100" height="3.800" fill="#1fb0e2"/><rect x="1904" y="50.500" width="1.100" height="1.100" fill="#1fb0e2"/>
</svg>
<!-- compress icon -->
<svg class="abs" style="left:1877px;top:89px" width="28" height="28" viewBox="0 0 28 28"><g fill="#0b5a88" stroke="#0b5a88" stroke-width="2"><path d="M23.500,4.500 L17,11" /><path d="M15.500,6.500 L15.500,12.500 L21.500,12.500 Z" stroke-width=".5"/><path d="M4.500,23.500 L11,17"/><path d="M12.500,21.500 L12.500,15.500 L6.500,15.500 Z" stroke-width=".5"/></g></svg>
<!-- axis triad -->
<svg class="abs" style="left:1790px;top:830px" width="90" height="75" viewBox="1790 830 90 75">
<ellipse cx="1830" cy="878" rx="30" ry="11.500" fill="#9fb6c6" fill-opacity=".28" stroke="#a9bdcb" stroke-opacity=".55" stroke-width="1.500"/>
<path d="M1830,877 L1830,851 C1843,853 1853,863 1857,876 Z" fill="#b9cad6" fill-opacity=".28" stroke="#b5c6d2" stroke-opacity=".6" stroke-width="1"/>
<path d="M1830,877 L1830,851 C1824,858 1820,873 1818,888 Z" fill="#b9cad6" fill-opacity=".3" stroke="#b5c6d2" stroke-opacity=".5" stroke-width="1"/>
<g stroke="#c2d0da" stroke-width="1.100"><path d="M1830,877 V848"/><path d="M1830,877 L1859,882.500 M1830,877 L1818,889" opacity=".45"/></g>
<path d="M1830,844 L1827.800,849 L1832.200,849Z M1862,883 L1857,880 L1856.500,884.500Z M1816,891 L1817,887 L1820.500,890Z" fill="#e4ecf1"/>
<circle cx="1830" cy="877" r="3" fill="#fff"/>
<g fill="#cfdbe3" font-family="Liberation Sans,sans-serif" font-size="7"><text x="1827.500" y="841">Z</text><text x="1866" y="888">Y</text><text x="1809.500" y="897">X</text></g>
</svg>
<!-- pointer -->
<svg class="abs" style="left:1890px;top:936px" width="28" height="30" viewBox="1890 936 28 30"><defs><linearGradient id="pg" x1="0" y1="0" x2="1" y2="1"><stop offset="0" stop-color="#fff"/><stop offset=".5" stop-color="#d0d0d0"/><stop offset="1" stop-color="#1c1c1c"/></linearGradient></defs>
<path d="M1915.200,939.300 L1893.700,955.600 L1902,956.500 L1904.800,962.900 Z" fill="url(#pg)"/><path d="M1915.200,939.300 L1902,956.500 L1904.800,962.900 Z" fill="#555" opacity=".55"/></svg>
</body></html>
